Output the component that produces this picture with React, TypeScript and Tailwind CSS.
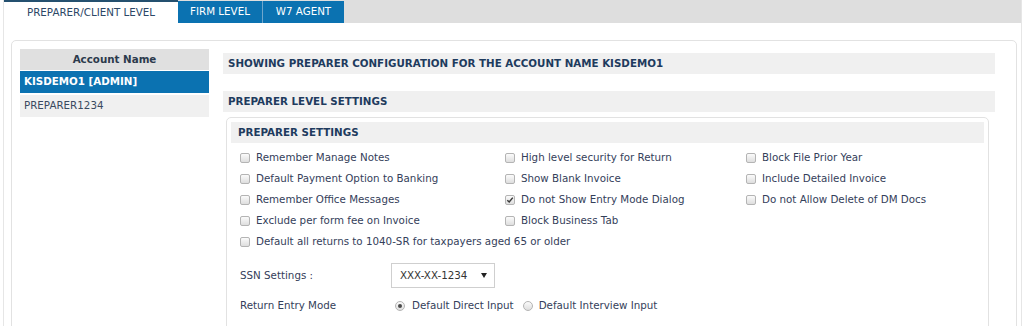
const leftItems = [
  { label: "KISDEMO1 [ADMIN]", active: true },
  { label: "PREPARER1234", active: false },
];

const rows: { label: string; checked?: boolean }[][] = [
  [{ label: "Remember Manage Notes" }, { label: "High level security for Return" }, { label: "Block File Prior Year" }],
  [{ label: "Default Payment Option to Banking" }, { label: "Show Blank Invoice" }, { label: "Include Detailed Invoice" }],
  [{ label: "Remember Office Messages" }, { label: "Do not Show Entry Mode Dialog", checked: true }, { label: "Do not Allow Delete of DM Docs" }],
  [{ label: "Exclude per form fee on Invoice" }, { label: "Block Business Tab" }],
];

function Check({ checked }: { checked?: boolean }) {
  return (
    <span className="w-[10px] h-[10px] shrink-0 rounded-[2px] border border-[#b4b4b4] bg-gradient-to-b from-[#fbfbfb] to-[#dedede] flex items-center justify-center">
      {checked && (
        <svg width="8" height="8" viewBox="0 0 8 8">
          <path d="M1.3 4.2 L3.2 6 L6.8 1.6" fill="none" stroke="#3a3a3a" strokeWidth="1.5" />
        </svg>
      )}
    </span>
  );
}

function CheckItem({ label, checked }: { label: string; checked?: boolean }) {
  return (
    <div className="flex items-center gap-[6px] h-[21px] whitespace-nowrap">
      <Check checked={checked} />
      <span>{label}</span>
    </div>
  );
}

function Radio({ checked }: { checked?: boolean }) {
  return (
    <span className="w-[10px] h-[10px] shrink-0 rounded-full border border-[#b4b4b4] bg-gradient-to-b from-[#fbfbfb] to-[#dedede] flex items-center justify-center">
      {checked && <span className="w-[4px] h-[4px] rounded-full bg-[#4a4a4a]" />}
    </span>
  );
}

export default function App() {
  return (
    <div className="w-[1024px] h-[326px] overflow-hidden bg-white font-['DejaVu_Sans',sans-serif] text-[10.3px] text-[#34405a]">
      <div className="ml-[3px] w-[1019px] h-[326px] border-x border-[#e6e6e6]">
        {/* tabs */}
        <div className="flex h-[23px] bg-[#dedede] text-[10.3px]">
          <div className="w-[174px] bg-white border-t-2 border-[#24506f] flex items-center justify-center text-[#2c4766]">
            PREPARER/CLIENT LEVEL
          </div>
          <div className="w-[85px] mt-px bg-[#0b72b1] text-white flex items-center justify-center border-r border-[#6fa6cc]">
            FIRM LEVEL
          </div>
          <div className="w-[81px] mt-px bg-[#0b72b1] text-white flex items-center justify-center">
            W7 AGENT
          </div>
        </div>

        <div className="pt-[17px] pl-[7px] pr-[4px]">
          <div className="h-[300px] border border-[#e2e2e2] rounded-[5px] flex pt-[8px] pl-[8px] pr-[21px]">
            {/* account list */}
            <div className="w-[189px] shrink-0 flex flex-col">
              <div className="h-[21px] bg-[#e0e0e0] flex items-center justify-center font-bold text-[#2c3a4c]">
                Account Name
              </div>
              {leftItems.map(item => (
                <div key={item.label}
                  className={`h-[22px] flex items-center pl-[4px] ${item.active ? "mt-px bg-[#0b72b1] text-white font-bold" : "mt-[2px] bg-[#f0f0f0] text-[#3a4a60]"}`}>
                  {item.label}
                </div>
              ))}
            </div>

            {/* settings */}
            <div className="flex-1 ml-[14px] mt-[4px] flex flex-col">
              <div className="h-[21px] bg-[#f0f0f0] flex items-center pl-[5px] font-bold text-[#1e3b5e]">
                SHOWING PREPARER CONFIGURATION FOR THE ACCOUNT NAME KISDEMO1
              </div>
              <div className="h-[21px] mt-[17px] bg-[#f0f0f0] flex items-center pl-[5px] font-bold text-[#1e3b5e]">
                PREPARER LEVEL SETTINGS
              </div>

              <div className="mt-[5px] ml-[3px] mr-[6px] border border-[#e2e2e2] rounded-[5px] p-[4px] h-[220px]">
                <div className="h-[21px] bg-[#f0f0f0] flex items-center pl-[7px] font-bold text-[#1e3b5e]">
                  PREPARER SETTINGS
                </div>

                <div className="pl-[9px] mt-[4px]">
                  {rows.map((row, i) => (
                    <div key={i} className="grid grid-cols-[265px_241px_1fr]">
                      {row.map(c => <CheckItem key={c.label} label={c.label} checked={c.checked} />)}
                    </div>
                  ))}
                  <CheckItem label="Default all returns to 1040-SR for taxpayers aged 65 or older" />

                  <div className="flex items-center h-[25px] mt-[11px]">
                    <span className="w-[151px]">SSN Settings :</span>
                    <div className="w-[104px] h-[25px] border border-[#cfcfcf] flex items-center justify-between pl-[8px] pr-[7px] text-[#333]">
                      <span>XXX-XX-1234</span>
                      <svg width="6" height="5" viewBox="0 0 6 5">
                        <path d="M0 0 H6 L3 5 Z" fill="#222" />
                      </svg>
                    </div>
                  </div>

                  <div className="flex items-center h-[20px] mt-[8px]">
                    <span className="w-[155px]">Return Entry Mode</span>
                    <Radio checked />
                    <span className="ml-[7px]">Default Direct Input</span>
                    <span className="ml-[9px]"><Radio /></span>
                    <span className="ml-[6px]">Default Interview Input</span>
                  </div>
                </div>
              </div>
            </div>
          </div>
        </div>
      </div>
    </div>
  );
}
